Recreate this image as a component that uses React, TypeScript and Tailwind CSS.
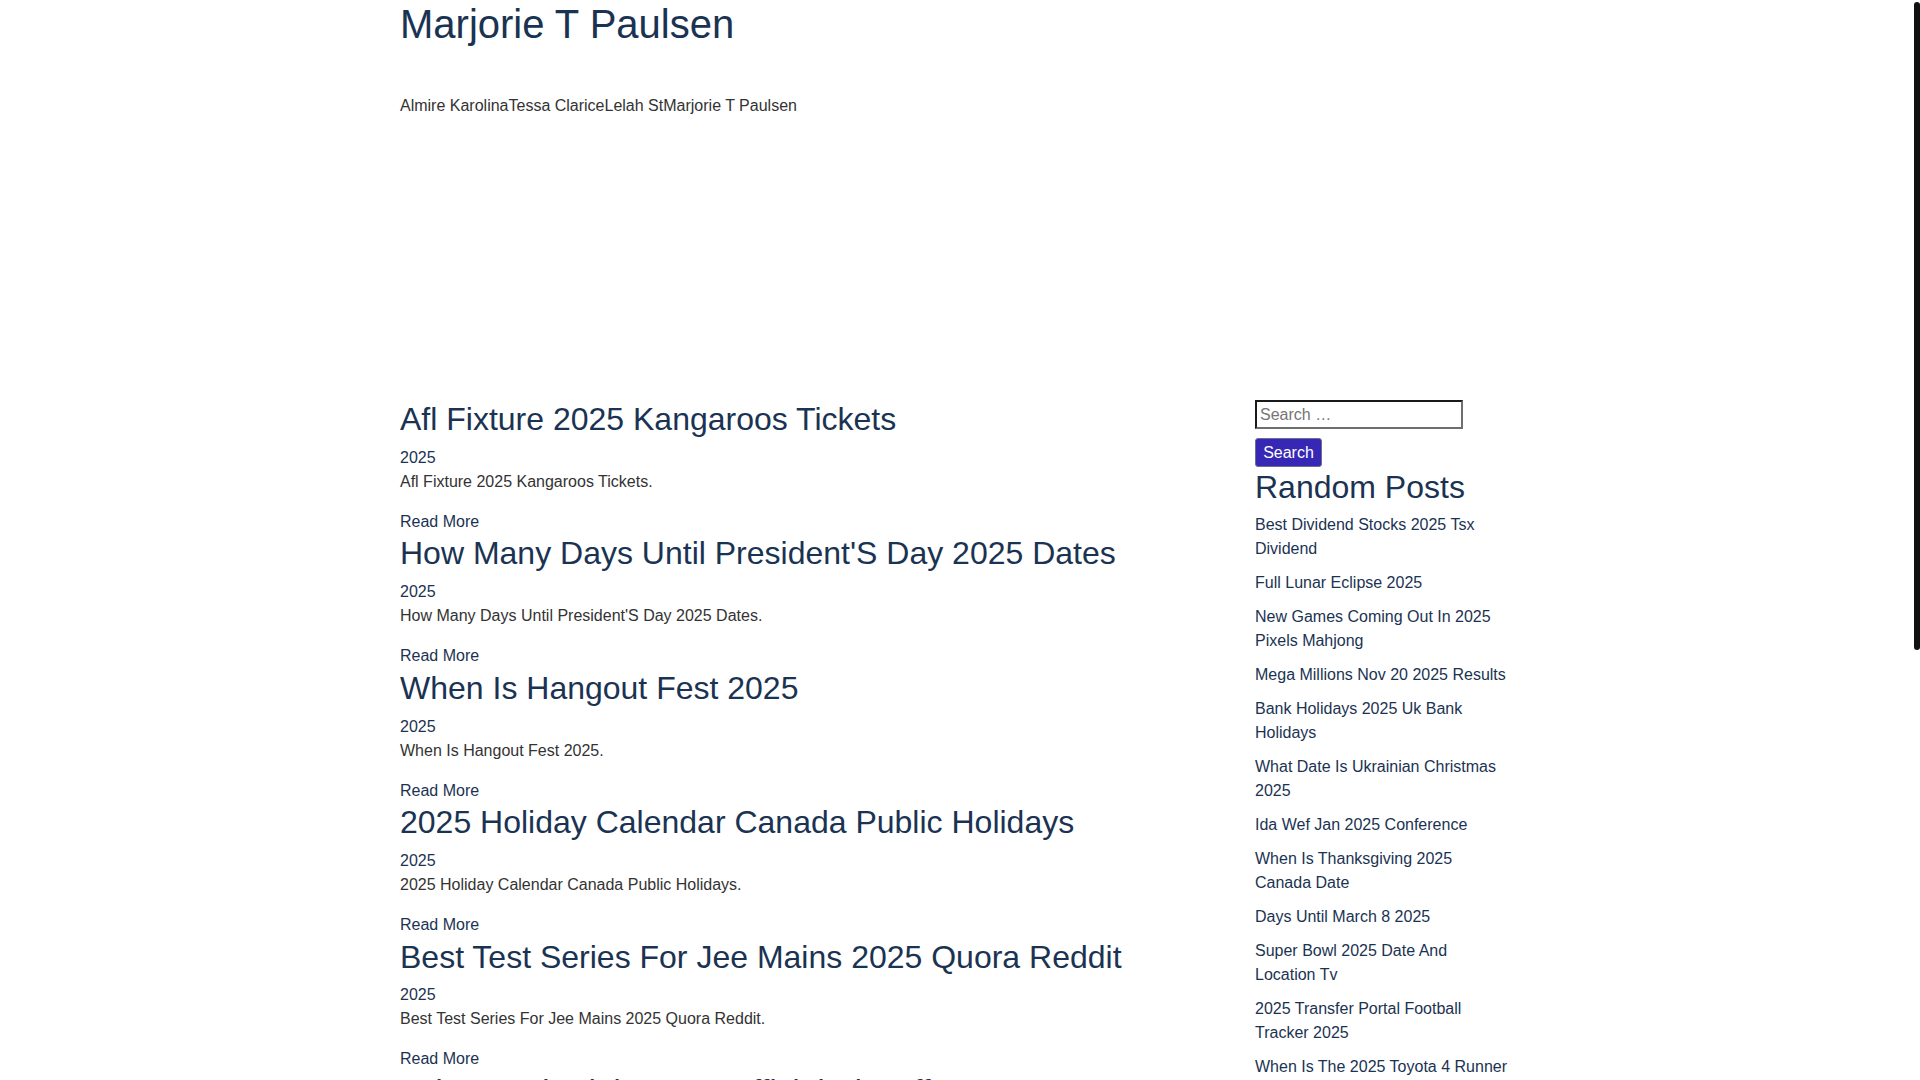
import React from 'react';

const navLinks = ['Almire Karolina', 'Tessa Clarice', 'Lelah St', 'Marjorie T Paulsen'];

const posts = [
  'Afl Fixture 2025 Kangaroos Tickets',
  "How Many Days Until President'S Day 2025 Dates",
  'When Is Hangout Fest 2025',
  '2025 Holiday Calendar Canada Public Holidays',
  'Best Test Series For Jee Mains 2025 Quora Reddit',
  'Lakers Schedule 2025 Official Playoff Dates',
];

const randomPosts = [
  'Best Dividend Stocks 2025 Tsx Dividend',
  'Full Lunar Eclipse 2025',
  'New Games Coming Out In 2025 Pixels Mahjong',
  'Mega Millions Nov 20 2025 Results',
  'Bank Holidays 2025 Uk Bank Holidays',
  'What Date Is Ukrainian Christmas 2025',
  'Ida Wef Jan 2025 Conference',
  'When Is Thanksgiving 2025 Canada Date',
  'Days Until March 8 2025',
  'Super Bowl 2025 Date And Location Tv',
  '2025 Transfer Portal Football Tracker 2025',
  'When Is The 2025 Toyota 4 Runner Coming Out',
];

const App: React.FC = () => {
  return (
    <div className="h-[1080px] overflow-hidden bg-white font-['Liberation_Sans',Arial,sans-serif]">
      <div className="w-[1120px] mx-auto">
        {/* Header */}
        <header>
          <h1 className="text-[40px] leading-[1.2] text-[#1b3352]">Marjorie T Paulsen</h1>
          <nav className="mt-[46px] flex text-[16px] leading-[24px] text-[#333]">
            {navLinks.map((link) => (
              <a key={link} href="#">
                {link}
              </a>
            ))}
          </nav>
          {/* empty ad slot */}
          <div className="h-[282px]"></div>
        </header>

        <div className="flex">
          {/* Posts */}
          <main className="flex-1">
            {posts.map((title) => (
              <article key={title} className="pb-[0.6px]">
                <h2 className="text-[32px] leading-[1.2] text-[#1b3352]">
                  <a href="#">{title}</a>
                </h2>
                <div className="mt-[7.4px] text-[16px] leading-[24px] text-[#1b3352]">
                  <a href="#">2025</a>
                </div>
                <p className="mb-[16px] text-[16px] leading-[24px] text-[#333]">{title}.</p>
                <a href="#" className="block text-[16px] leading-[24px] text-[#1b3352]">
                  Read More
                </a>
              </article>
            ))}
          </main>

          {/* Sidebar */}
          <aside className="w-[255px] mr-[10px] shrink-0">
            <form className="flex flex-col items-start" onSubmit={(e) => e.preventDefault()}>
              <input
                type="search"
                placeholder="Search …"
                className="w-[208px] h-[29px] px-[3px] text-[16px] text-[#222] placeholder:text-[#757575] border-2 border-t-[#1a1a1a] border-l-[#1a1a1a] border-r-[#6e6e6e] border-b-[#6e6e6e] outline-none"
              />
              <button
                type="submit"
                className="mt-[9px] w-[67px] h-[29px] text-[16px] text-white bg-[#3628b4] border border-[#6d6d8f] rounded-[3px]"
              >
                Search
              </button>
            </form>
            <h2 className="mt-[0.5px] text-[32px] leading-[1.2] text-[#1b3352]">Random Posts</h2>
            <ul className="mt-[7.5px] flex flex-col gap-[10px] text-[16px] leading-[24px] text-[#1b3352]">
              {randomPosts.map((post) => (
                <li key={post}>
                  <a href="#">{post}</a>
                </li>
              ))}
            </ul>
          </aside>
        </div>
      </div>

      {/* overlay scrollbar thumb */}
      <div className="fixed top-[2px] right-0 w-[6px] h-[648px] rounded-full bg-[#111]"></div>
    </div>
  );
};

export default App;
